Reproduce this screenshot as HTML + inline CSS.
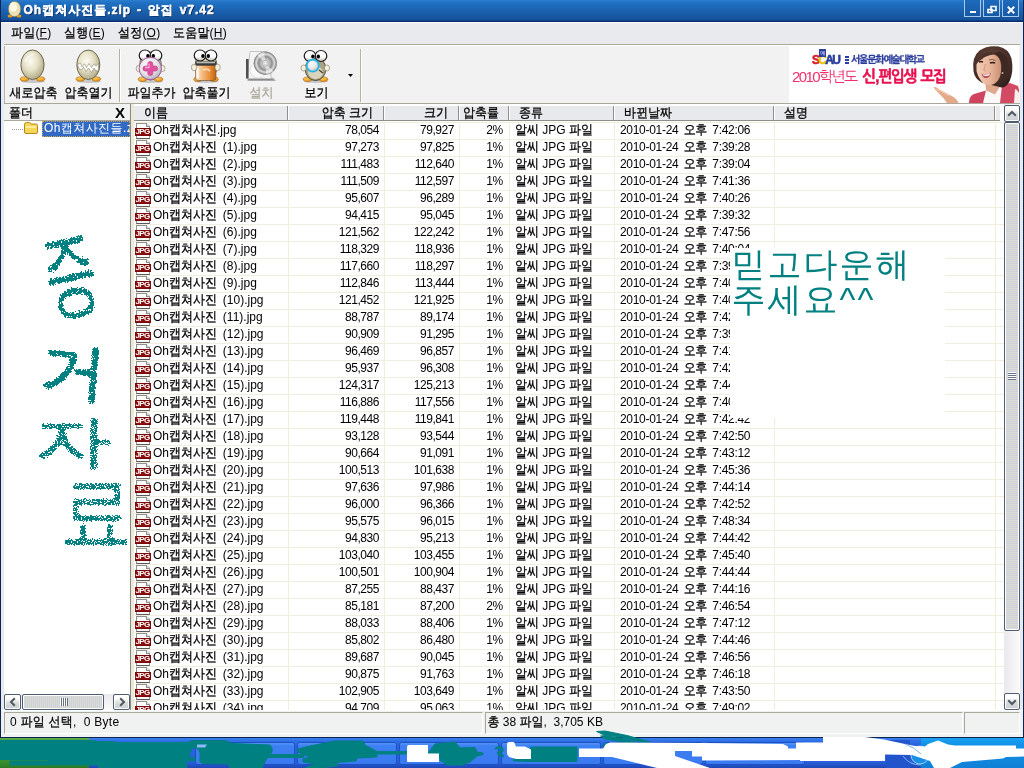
<!DOCTYPE html>
<html lang="ko"><head><meta charset="utf-8"><title>Oh캡쳐사진들.zip - 알집 v7.42</title>
<style>
*{box-sizing:border-box;margin:0;padding:0}
html,body{width:1024px;height:768px;overflow:hidden;background:#245edb}
body{opacity:.999;position:relative;font:12px "Liberation Sans","WenQuanYi Zen Hei","NanumGothic","Noto Sans CJK KR",sans-serif;color:#000}
.abs{position:absolute}
b{font-weight:normal;-webkit-text-stroke-width:.28px}
#frame{position:absolute;left:0;top:0;width:1024px;height:738px;background:#e9eaed;border-left:1px solid #0a2350;border-right:1px solid #0a2350;border-bottom:1px solid #0a2350}
#title{position:absolute;left:1px;top:0;width:1022px;height:22px;background:linear-gradient(#2a7dd0 0,#2070c2 3px,#1b63b2 10px,#17579f 17px,#144f96 20px,#062a6c 21.5px,#062a6c 22px);color:#fff;font-weight:bold;font-size:12px}
#title .t b{-webkit-text-stroke:1px #fff;font-weight:bold}
#title .t{position:absolute;left:22.5px;top:2px;white-space:nowrap;letter-spacing:1px;word-spacing:1.5px;-webkit-text-stroke:0.5px #fff;text-shadow:1px 1px 0 #06204e}
.tb{position:absolute;top:-1px;width:17px;height:18px;border:1px solid #a7c7ec;background:linear-gradient(#1e6abb,#175aa5)}
#menu{position:absolute;left:1px;top:22px;width:1022px;height:22px;background:#e9eaed;border-top:1px solid #fff}
#menu span{position:absolute;top:2px;white-space:nowrap;letter-spacing:0.2px}
#menu u{text-decoration:underline;text-underline-offset:1px}
#tbar{position:absolute;left:4px;top:44px;width:1016px;height:60px;background:#f1f2f1;border-top:1px solid #aca899;border-bottom:1px solid #aca899;box-shadow:inset 1px 0 0 #b9b6a4}
#tbar:before{content:"";position:absolute;left:0;top:0;width:100%;height:1px;background:#fff}
.tl{position:absolute;top:40px;margin-left:.5px;white-space:nowrap;text-align:center;letter-spacing:0;width:60px}
.sep{position:absolute;top:4px;width:2px;height:53px;border-left:1px solid #b5b2a0;border-right:1px solid #fff}
.ic{position:absolute}
/* panels */
#lhead{position:absolute;left:4px;top:104px;width:126px;height:17px;background:#f0f1f1;border-bottom:1px solid #aca899}
#ltree{position:absolute;left:4px;top:121px;width:126px;height:573px;background:#fff}
#split{position:absolute;left:130px;top:104px;width:4px;height:606px;background:#ece9d8;border-left:1px solid #8a8a80}
#list{position:absolute;left:134px;top:104px;width:870px;height:606px;background:#fff;overflow:hidden;
 background-image:linear-gradient(#f1eedd,#f1eedd),linear-gradient(#f1eedd,#f1eedd),linear-gradient(#f1eedd,#f1eedd),linear-gradient(#f1eedd,#f1eedd),linear-gradient(#f1eedd,#f1eedd),linear-gradient(#f1eedd,#f1eedd),linear-gradient(#f1eedd,#f1eedd);
 background-repeat:no-repeat;background-size:1px 100%;
 background-position:154px 0,250px 0,325px 0,375px 0,480px 0,640px 0,861px 0}
#lh{position:absolute;left:0;top:0;width:870px;height:18px;background:linear-gradient(#fff 0,#fff 2px,#e8e9ec 2px,#e8e9ec 16px,#8f8f88 16px,#8f8f88 17px,#fff 17px);}
#lh i{position:absolute;left:866px;top:2px;width:4px;height:16px;background:#fff}
#lh span{position:absolute;top:2px;height:14px;line-height:15px;border-right:1px solid #fff;white-space:nowrap;letter-spacing:0}
#lh span:after{content:"";position:absolute;right:0;top:0;width:1px;height:14px;background:#8f8f88}
#rows{position:absolute;left:0;top:18px;width:870px;border-top:1px solid #f1eedd}
.row{position:relative;height:17px;border-bottom:1px solid #f1eedd;white-space:nowrap}

.c{position:absolute;top:0;height:15px;line-height:15px;white-space:nowrap}
.row{z-index:0}
.ji{position:absolute;left:1px;top:5px;width:16px;height:8px;background:#8c0f0f;box-shadow:inset 0 0 0 1px #7a0808;color:#fff;font:bold 8px/8.500px "Liberation Sans",sans-serif;text-align:center;font-style:normal;letter-spacing:-.7px;text-indent:-1px;overflow:visible}
.ji:before{content:"";box-sizing:border-box;position:absolute;left:1px;top:-5px;width:14px;height:16px;border:1px solid #909090;border-bottom-color:#5a5a5a;background:#fff;z-index:-1}
.ji:after{content:"";box-sizing:border-box;position:absolute;left:11px;top:-5px;width:4px;height:4px;background:linear-gradient(45deg,#d8d8d8 50%,#fff 50%);border-left:1px solid #909090;border-bottom:1px solid #909090;z-index:-1}
.nm{left:19px;letter-spacing:0;word-spacing:2.5px}
.cs{left:154px;width:91px;text-align:right;letter-spacing:-0.45px}
.sz{left:249px;width:71px;text-align:right;letter-spacing:-0.45px}
.rt{left:324px;width:45px;text-align:right;letter-spacing:-0.3px}
.ty{left:381px;letter-spacing:0}
.dt{left:486px;letter-spacing:-0.3px;word-spacing:2.2px}
#vs{position:absolute;left:1004px;top:104px;width:16px;height:606px;background:linear-gradient(90deg,#e9e9ed,#fbfbfb)}
#hs{position:absolute;left:4px;top:694px;width:126px;height:16px;background:linear-gradient(#e9e9ed,#fbfbfb)}
.sb{position:absolute;width:16px;height:17px;border:1px solid #4f5d72;border-radius:2px;background:linear-gradient(#fff 0,#fdfdfb 25%,#d9dbd6 60%,#c9cdd9 100%);box-shadow:inset 0 0 0 1px #fff}
#status{position:absolute;left:1px;top:710px;width:1022px;height:27px;background:#f0f1f1;border-top:1px solid #fff}
.sp{position:absolute;top:1px;height:22px;border:1px solid;border-color:#aca899 #fff #fff #aca899;line-height:19px;padding-left:5px;white-space:nowrap;letter-spacing:0.1px}
#paint{position:absolute;left:730px;top:248px;width:215px;height:170px;background:#fff;overflow:hidden}
#paint div{position:absolute;left:1.5px;color:#008080;-webkit-text-stroke:0;font:34px/36px "Liberation Sans","WenQuanYi Zen Hei","NanumGothic","Noto Sans CJK KR",sans-serif;white-space:nowrap;letter-spacing:2px}
#paint span{letter-spacing:2px}
.hw{position:absolute;color:#008080;-webkit-text-stroke:2.6px #008080;font:60px/60px "Liberation Sans","WenQuanYi Zen Hei","NanumGothic","Noto Sans CJK KR",sans-serif;transform-origin:0 0;filter:url(#spray)}
.c,#menu span,.tl,#lhead span,.sp u{transform:scaleY(1.09);transform-origin:50% 55%}
#lh b{display:inline-block;transform:scaleY(1.09);transform-origin:50% 55%}
.sp u{display:inline-block;text-decoration:none}
.sel b{-webkit-text-stroke-width:0}
</style></head><body>
<svg width="0" height="0" style="position:absolute">
<defs>
<filter id="spray" x="-10%" y="-10%" width="120%" height="120%" color-interpolation-filters="sRGB"><feGaussianBlur in="SourceGraphic" stdDeviation="1.300" result="b"/><feTurbulence type="fractalNoise" baseFrequency="0.850" numOctaves="2" seed="7" result="n"/><feColorMatrix in="n" type="matrix" values="0 0 0 0 0 0 0 0 0 0 0 0 0 0 0 1.500 0 0 0 -0.250" result="m"/><feComposite in="b" in2="m" operator="arithmetic" k1="2" k2="0.200" k3="0" k4="-0.775" result="c"/><feComponentTransfer in="c"><feFuncA type="discrete" tableValues="0 1 1 1 1 1 1 1"/><feFuncR type="discrete" tableValues="0"/><feFuncG type="discrete" tableValues="0.502"/><feFuncB type="discrete" tableValues="0.502"/></feComponentTransfer></filter>
</defs></svg>
<div id="frame"></div>
<div id="title">
 <svg class="abs" style="left:6px;top:1px" width="15" height="17" viewBox="0 0 15 17"><ellipse cx="3" cy="15" rx="2.4" ry="1.5" fill="#f39a12"/><ellipse cx="12" cy="15" rx="2.4" ry="1.5" fill="#f39a12"/><ellipse cx="7.5" cy="8" rx="6.3" ry="7.8" fill="#e9e2b5" stroke="#6f6a4a" stroke-width=".6"/><ellipse cx="6.3" cy="6" rx="3.8" ry="4.8" fill="#fffef2" opacity=".8"/></svg>
 <span class="t">Oh<b>캡쳐사진들</b>.zip - <b>알집</b> v7.42</span>
 <div class="tb" style="left:963px"><i class="abs" style="left:5px;top:11px;width:6px;height:2px;background:#fff"></i></div>
 <div class="tb" style="left:982px"><svg class="abs" style="left:3px;top:5px" width="10" height="9"><path d="M4 1.5h5v4h-5z M1 4.5h4v3h-4z" fill="#1b5fb0" stroke="#fff" stroke-width="1.6"/></svg></div>
 <div class="tb" style="left:1001px"><svg class="abs" style="left:4px;top:6px" width="8" height="8"><path d="M.8 .8l6.4 6.4M7.2 .8l-6.4 6.4" stroke="#fff" stroke-width="2"/></svg></div>
</div>
<div id="menu"><span style="left:10px"><b>파일</b>(<u>F</u>)</span><span style="left:63px"><b>실행</b>(<u>E</u>)</span><span style="left:117px"><b>설정</b>(<u>O</u>)</span><span style="left:172px"><b>도움말</b>(<u>H</u>)</span></div>
<div id="tbar">
 <svg class="abs" style="left:-4px;top:-1px" width="370" height="60" viewBox="0 44 370 60">
<defs>
<radialGradient id="eg" cx=".42" cy=".38" r=".62"><stop offset="0" stop-color="#fcfbf2"/><stop offset=".5" stop-color="#e7e2c8"/><stop offset="1" stop-color="#b3ac88"/></radialGradient>
<radialGradient id="gl" cx=".4" cy=".35" r=".7"><stop offset="0" stop-color="#fff"/><stop offset=".6" stop-color="#e4e4e6"/><stop offset="1" stop-color="#a9a9b0"/></radialGradient>
<radialGradient id="cd" cx=".5" cy=".5" r=".5"><stop offset="0" stop-color="#fff"/><stop offset=".25" stop-color="#d8d8d8"/><stop offset=".6" stop-color="#8f8f8f"/><stop offset=".8" stop-color="#dcdcdc"/><stop offset="1" stop-color="#8a8a8a"/></radialGradient>
<linearGradient id="or" x1="0" x2="1"><stop offset="0" stop-color="#fdeedb"/><stop offset=".3" stop-color="#f6c089"/><stop offset=".65" stop-color="#ea9440"/><stop offset="1" stop-color="#c06412"/></linearGradient>
<radialGradient id="ft" cx=".4" cy=".3" r=".8"><stop offset="0" stop-color="#ffd257"/><stop offset="1" stop-color="#e8830f"/></radialGradient>
<linearGradient id="ey" x1="0" y1="0" x2="0" y2="1"><stop offset="0" stop-color="#fff"/><stop offset=".6" stop-color="#fafafa"/><stop offset="1" stop-color="#bdbdb5"/></linearGradient><g id="eyes"><ellipse cx="-5.500" cy="0" rx="5.800" ry="5.500" fill="url(#ey)" stroke="#1a1a1a" stroke-width="1.200"/><ellipse cx="5.500" cy="0" rx="5.800" ry="5.500" fill="url(#ey)" stroke="#1a1a1a" stroke-width="1.200"/><ellipse cx="-2.600" cy=".5" rx="1.700" ry="2.100" fill="#000"/><ellipse cx="2.800" cy=".5" rx="1.700" ry="2.100" fill="#000"/></g>
<g id="feet"><ellipse cx="-8" cy="0" rx="4.300" ry="2.200" fill="url(#ft)" stroke="#9a5a08" stroke-width=".5"/><ellipse cx="8" cy="0" rx="4.300" ry="2.200" fill="url(#ft)" stroke="#9a5a08" stroke-width=".5"/></g>
</defs>
<!-- egg 1 -->
<ellipse cx="33" cy="81.500" rx="12" ry="1.500" fill="#000" opacity=".18"/>
<use href="#feet" x="32.500" y="79"/>
<ellipse cx="32.500" cy="64.800" rx="11.600" ry="14.800" fill="url(#eg)" stroke="#5e5942" stroke-width=".9"/>
<path d="M25 62q3-7 9-8" fill="none" stroke="#fff" stroke-width="1.600" opacity=".7"/>
<!-- egg 2 -->
<ellipse cx="89" cy="81.500" rx="12" ry="1.500" fill="#000" opacity=".18"/>
<use href="#feet" x="88.300" y="79"/>
<ellipse cx="88.300" cy="64.800" rx="11.500" ry="14.800" fill="url(#eg)" stroke="#5e5942" stroke-width=".9"/>
<path d="M77.500 64.500l3-1.200 1.500 3.500 2.500-3 2 3.700 2.500-4 2.500 4 2.500-3.700 2 2.500 2.500-2.800v6.500l-2.500 1-2-3-2.500 4.500-3-4.500-2.500 3.500-2.500-4.500-2 3-2.500-1.500z" fill="#fff" stroke="#77725a" stroke-width=".5"/>
<!-- add file penguin -->
<ellipse cx="151" cy="81.500" rx="12" ry="1.500" fill="#000" opacity=".18"/>
<ellipse cx="150.500" cy="66" rx="11" ry="14" fill="#d6d0ae" stroke="#4a4636" stroke-width=".8"/>
<use href="#feet" x="150.500" y="79.300"/>
<ellipse cx="138.600" cy="68.500" rx="2.400" ry="3.200" fill="#f3f0dc" stroke="#6a654c" stroke-width=".5"/><ellipse cx="162.600" cy="68.500" rx="2.400" ry="3.200" fill="#f3f0dc" stroke="#6a654c" stroke-width=".5"/>
<use href="#eyes" x="150.500" y="55.500"/>
<circle cx="150.300" cy="68.500" r="11.200" fill="url(#gl)" stroke="#a2569c" stroke-width="1"/>
<path d="M150.300 61.500q2.600 0 2.600 2.600v1.800h2.200q2.600 0 2.600 2.600t-2.600 2.600h-2.200v1.800q0 2.600-2.600 2.600t-2.600-2.600v-1.800h-2.200q-2.600 0-2.600-2.600t2.600-2.600h2.200v-1.800q0-2.600 2.600-2.600z" fill="#e0529f" stroke="#c23a86" stroke-width=".6"/>
<path d="M149 63.500v4h-4" fill="none" stroke="#f7a8d3" stroke-width="1.300"/>
<!-- extract penguin -->
<ellipse cx="206.500" cy="81.500" rx="12" ry="1.500" fill="#000" opacity=".18"/>
<ellipse cx="206" cy="66" rx="11" ry="14" fill="#d6d0ae" stroke="#4a4636" stroke-width=".8"/>
<use href="#feet" x="206" y="79.300"/>
<use href="#eyes" x="205.500" y="55.500"/>
<path d="M195.500 62.500h20.500v15.500q0 2.500-3 2.500h-14.500q-3 0-3-2.500z" fill="url(#or)" stroke="#6b4a28" stroke-width=".6"/>
<rect x="195.500" y="61.500" width="20.500" height="4.200" fill="#3a3a3a"/><rect x="196.500" y="62" width="18.500" height="1.300" fill="#bdbdbd"/>
<path d="M198 68v10" stroke="#fff" stroke-width="2" opacity=".7"/><path d="M203 70q4-2 7 1" stroke="#fbe0bd" stroke-width="2" fill="none" opacity=".8"/>
<ellipse cx="194" cy="67.500" rx="2.600" ry="3.300" fill="#f3f0dc" stroke="#6a654c" stroke-width=".5"/><ellipse cx="217.600" cy="67.500" rx="2.600" ry="3.300" fill="#f3f0dc" stroke="#6a654c" stroke-width=".5"/>
<!-- install (disabled) -->
<path d="M250 51.500h17l4 4v22.500h2.500l2 2.500h-27l-1.500-2.500z" fill="#f4f4f4" stroke="#b9b9b9" stroke-width=".8"/>
<rect x="246" y="59" width="2.600" height="19.500" fill="#4f4f4f"/>
<path d="M248.600 78.500h24l2.500 2h-28z" fill="#8c8c8c"/>
<circle cx="258" cy="70" r="8" fill="#fafafa" stroke="#d5d5d5" stroke-width=".8"/>
<circle cx="265.300" cy="63.200" r="11.300" fill="url(#cd)" stroke="#7d7d7d" stroke-width=".7"/>
<path d="M265.300 63.200l-8-8a11.300 11.300 0 0 1 7-3.200zM265.300 63.200l8 8a11.300 11.300 0 0 1-7 3.200z" fill="#fff" opacity=".55"/>
<circle cx="265.300" cy="63.200" r="3" fill="#e9e9e9" stroke="#8b8b8b" stroke-width=".6"/><circle cx="265.300" cy="63.200" r="1.300" fill="#fff" stroke="#9b9b9b" stroke-width=".4"/>
<!-- view penguin -->
<ellipse cx="316" cy="81.500" rx="12" ry="1.500" fill="#000" opacity=".18"/>
<use href="#feet" x="315.500" y="79.300" transform="translate(0 0)"/>
<ellipse cx="315.500" cy="69" rx="10.300" ry="11.500" fill="#a9a283" stroke="#3f3b2c" stroke-width=".9"/>
<ellipse cx="315.500" cy="72.500" rx="7.500" ry="6.500" fill="#d9d4bb"/>
<path d="M319 70l4 3" stroke="#3f3b2c" stroke-width="1.200"/>
<use href="#eyes" x="315.500" y="56"/>
<ellipse cx="303.600" cy="68" rx="2.600" ry="3" fill="#f3f0dc" stroke="#6a654c" stroke-width=".5"/><ellipse cx="327" cy="68" rx="2.600" ry="3" fill="#f3f0dc" stroke="#6a654c" stroke-width=".5"/>
<circle cx="312.800" cy="65.700" r="6" fill="url(#gl)" stroke="#25b6e6" stroke-width="1.700"/>
</svg>

 <span class="tl" style="left:-1px"><b>새로압축</b></span>
 <span class="tl" style="left:54px"><b>압축열기</b></span>
 <div class="sep" style="left:115px"></div>
 <span class="tl" style="left:117px"><b>파일추가</b></span>
 <span class="tl" style="left:172px"><b>압축풀기</b></span>
 <span class="tl" style="left:227px;color:#aca899;-webkit-text-stroke:0.2px #aca899"><b>설치</b></span>
 <span class="tl" style="left:282px"><b>보기</b></span>
 <svg class="abs" style="left:344px;top:29px" width="5" height="3"><path d="M0 0h5l-2.500 3z" fill="#000"/></svg>
 <div class="sep" style="left:356px"></div>
 <div id="banner" class="abs" style="left:785px;top:0px;width:230px;height:58px;background:#fff;overflow:hidden;-webkit-text-stroke:0">
 <div class="abs" style="left:23px;top:9px;font:bold 12px/13px 'Liberation Sans',sans-serif;letter-spacing:-1.700px;-webkit-text-stroke:0.600px currentColor"><span style="color:#d9202a">S</span><span style="color:#e9c410">C</span><span style="color:#2a3f9e">A</span><span style="color:#2a3f9e">U</span></div>
 <div class="abs" style="left:30px;top:4px;width:7px;height:8px;background:#2a3f9e;color:#fff;font:5px/8px 'Liberation Sans','NanumGothic',sans-serif;text-align:center">예</div>
 <div class="abs" style="left:56px;top:11px;width:4px;height:9px;background:repeating-linear-gradient(#2a3f9e 0,#2a3f9e 2px,#fff 2px,#fff 3px)"></div>
 <div class="abs" style="left:62px;top:9px;font:bold 10px/12px 'Liberation Sans','NanumGothic',sans-serif;color:#2a3c9c;letter-spacing:-1.300px;white-space:nowrap;-webkit-text-stroke:0.300px #2a3c9c">서울문화예술대학교</div>
 <div class="abs" style="left:3px;top:23px;font:15px/18px 'Liberation Sans','NanumGothic',sans-serif;color:#f0306c;letter-spacing:-1.600px;white-space:nowrap">2010학년도</div>
 <div class="abs" style="left:73px;top:22px;font:bold 16px/19px 'Liberation Sans','NanumGothic',sans-serif;color:#e8104f;letter-spacing:-1.900px;word-spacing:3px;white-space:nowrap;transform:scaleX(.935);transform-origin:0 0;-webkit-text-stroke:0.500px #e8104f">신<span style="letter-spacing:0;margin:0 -1px 0 1px">,</span>편입생 모집</div>
 <svg class="abs" style="left:140px;top:0" width="90" height="58" viewBox="929 44 90 58">
  <defs><radialGradient id="hr" cx=".45" cy=".35" r=".7"><stop offset="0" stop-color="#6a4a3e"/><stop offset=".6" stop-color="#4a312a"/><stop offset="1" stop-color="#33211c"/></radialGradient>
  <linearGradient id="sk" x1="0" x2="1"><stop offset="0" stop-color="#f4cdb6"/><stop offset=".6" stop-color="#e6b296"/><stop offset="1" stop-color="#c98f74"/></linearGradient></defs>
  <path d="M933.500 86q3-.5 6 2.500 6 3 10 5.500 5 1.500 8.500 6.500v1.500h-11q-3-5-8-9.500-4-3.500-5.500-6.500z" fill="#e3a988"/>
  <path d="M936 88q7 3 13 6.500" fill="none" stroke="#f3cdb2" stroke-width="1.300"/>
  <path d="M969 102q0-7 5-9l12-3.500 3 12.500z" fill="#cf4560"/>
  <path d="M986 89.500l-3 12.500h22l5-19-8-1z" fill="#fdf8f8"/>
  <path d="M1002 84l8-2 8 3 1 4v13h-19z" fill="#d24a64"/>
  <path d="M1015 88q3 1 4 4v10h-5z" fill="#fbeef0"/>
  <path d="M985 78h14l2 6-6 9.500-9-4z" fill="#dda88c"/>
  <path d="M973.500 70q-2-14 6-20.500 8-5.500 19-4 10 2 13 12 2.500 13-2 23-3 6-8 6l-20-5q-7-4-8-11.500z" fill="url(#hr)"/>
  <path d="M976.500 63q.5-6 5-8.500l11-1.500q6 1 8 8 1.500 8-.5 14.500-2.500 7-9 8.500-6 .5-9.500-3.500-4-5-5-10.500z" fill="url(#sk)"/>
  <path d="M975.500 64q1.500-9 9-11.500 7-2.500 12.500.5-8 .5-13 3.500-5 3-8.500 7.500z" fill="#4a312a"/>
  <path d="M994 52.500q7 3 8 12.500l-1 12 4.500-1.500 3-9q0-12-8.500-16z" fill="#3d2822"/>
  <path d="M981.500 72.500q4.500 2 9.500-.5-1 4.500-4.500 5.200-4 0-5-4.700z" fill="#b8505a"/><path d="M982.500 73.200q4 1.300 7.500-.6l-.6 1.600q-3.200 1.400-6.200.4z" fill="#fff"/>
  <path d="M979 61.200q2-1.200 4 0M990 62q2.500-1.200 5 0" stroke="#2a1a14" stroke-width="1.500" fill="none"/>
  <path d="M978 58.500q2.500-1.500 5-.5M989 59q3-1.500 6.500.5" stroke="#5a3d33" stroke-width=".7" fill="none"/>
  <path d="M985.500 63q-1.200 4-1.700 6l2 .8" stroke="#c98f74" stroke-width=".8" fill="none"/>
  <circle cx="1002.500" cy="72" r="1" fill="#caa"/>
 </svg>
</div>

</div>
<div id="lhead"><span class="abs" style="left:5px;top:1px;letter-spacing:0"><b>폴더</b></span><span class="abs" style="left:111px;top:-.5px;font:bold 15px/17px 'Liberation Sans',sans-serif;transform:none">X</span></div>
<div id="ltree">
 <div class="abs" style="left:8px;top:8px;width:11px;border-top:1px dotted #999"></div>
 <svg class="abs" style="left:19px;top:0" width="16" height="14"><path d="M1.5 3.5q0-2 2-2h3l1.5 1.5h5q1.5 0 1.5 1.5v6.5q0 1.5-1.5 1.5h-10q-1.500 0-1.500-1.5z" fill="#f6d65a" stroke="#b58a12"/><path d="M2.500 6h10.500" stroke="#fff4b8" stroke-width="1.5"/></svg>
 <div class="abs sel" style="left:38px;top:0;width:88px;height:16px;background:#316ac5;color:#fff;outline:1px dotted #d9a64a;outline-offset:-1px;overflow:hidden;white-space:nowrap;line-height:15px;padding-left:2px;letter-spacing:0.42px">Oh<b>캡쳐사진들</b>.zip</div>
</div>
<div id="hs">
 <div class="sb" style="left:0;top:0;width:17px;height:16px"><svg class="abs" style="left:4px;top:2px" width="7" height="10"><path d="M5.800 1.200l-3.800 3.800 3.800 3.800" fill="none" stroke="#4d5766" stroke-width="2"/></svg></div>
 <div class="sb" style="left:18px;top:0;width:82px;height:16px;background:repeating-linear-gradient(90deg,#cdd0dc 0,#cdd0dc 1px,#dcddd1 1px,#dcddd1 2px)"><i class="abs" style="left:37px;top:3px;width:8px;height:8px;background:repeating-linear-gradient(90deg,#fff 0,#fff 1px,#677282 1px,#677282 2px)"></i></div>
 <div class="sb" style="left:109px;top:0;width:17px;height:16px"><svg class="abs" style="left:5px;top:2px" width="7" height="10"><path d="M1.200 1.200l3.800 3.800-3.800 3.800" fill="none" stroke="#4d5766" stroke-width="2"/></svg></div>
</div>
<div id="split"></div>
<div id="list">
 <div id="rows">
<div class="row"><i class="ji">JPG</i><span class="c nm">Oh<b>캡쳐사진</b>.jpg</span><span class="c cs">78,054</span><span class="c sz">79,927</span><span class="c rt">2%</span><span class="c ty"><b>알씨</b> JPG <b>파일</b></span><span class="c dt">2010-01-24 <b>오후</b> 7:42:06</span></div>
<div class="row"><i class="ji">JPG</i><span class="c nm">Oh<b>캡쳐사진</b> (1).jpg</span><span class="c cs">97,273</span><span class="c sz">97,825</span><span class="c rt">1%</span><span class="c ty"><b>알씨</b> JPG <b>파일</b></span><span class="c dt">2010-01-24 <b>오후</b> 7:39:28</span></div>
<div class="row"><i class="ji">JPG</i><span class="c nm">Oh<b>캡쳐사진</b> (2).jpg</span><span class="c cs">111,483</span><span class="c sz">112,640</span><span class="c rt">1%</span><span class="c ty"><b>알씨</b> JPG <b>파일</b></span><span class="c dt">2010-01-24 <b>오후</b> 7:39:04</span></div>
<div class="row"><i class="ji">JPG</i><span class="c nm">Oh<b>캡쳐사진</b> (3).jpg</span><span class="c cs">111,509</span><span class="c sz">112,597</span><span class="c rt">1%</span><span class="c ty"><b>알씨</b> JPG <b>파일</b></span><span class="c dt">2010-01-24 <b>오후</b> 7:41:36</span></div>
<div class="row"><i class="ji">JPG</i><span class="c nm">Oh<b>캡쳐사진</b> (4).jpg</span><span class="c cs">95,607</span><span class="c sz">96,289</span><span class="c rt">1%</span><span class="c ty"><b>알씨</b> JPG <b>파일</b></span><span class="c dt">2010-01-24 <b>오후</b> 7:40:26</span></div>
<div class="row"><i class="ji">JPG</i><span class="c nm">Oh<b>캡쳐사진</b> (5).jpg</span><span class="c cs">94,415</span><span class="c sz">95,045</span><span class="c rt">1%</span><span class="c ty"><b>알씨</b> JPG <b>파일</b></span><span class="c dt">2010-01-24 <b>오후</b> 7:39:32</span></div>
<div class="row"><i class="ji">JPG</i><span class="c nm">Oh<b>캡쳐사진</b> (6).jpg</span><span class="c cs">121,562</span><span class="c sz">122,242</span><span class="c rt">1%</span><span class="c ty"><b>알씨</b> JPG <b>파일</b></span><span class="c dt">2010-01-24 <b>오후</b> 7:47:56</span></div>
<div class="row"><i class="ji">JPG</i><span class="c nm">Oh<b>캡쳐사진</b> (7).jpg</span><span class="c cs">118,329</span><span class="c sz">118,936</span><span class="c rt">1%</span><span class="c ty"><b>알씨</b> JPG <b>파일</b></span><span class="c dt">2010-01-24 <b>오후</b> 7:40:04</span></div>
<div class="row"><i class="ji">JPG</i><span class="c nm">Oh<b>캡쳐사진</b> (8).jpg</span><span class="c cs">117,660</span><span class="c sz">118,297</span><span class="c rt">1%</span><span class="c ty"><b>알씨</b> JPG <b>파일</b></span><span class="c dt">2010-01-24 <b>오후</b> 7:39:50</span></div>
<div class="row"><i class="ji">JPG</i><span class="c nm">Oh<b>캡쳐사진</b> (9).jpg</span><span class="c cs">112,846</span><span class="c sz">113,444</span><span class="c rt">1%</span><span class="c ty"><b>알씨</b> JPG <b>파일</b></span><span class="c dt">2010-01-24 <b>오후</b> 7:40:12</span></div>
<div class="row"><i class="ji">JPG</i><span class="c nm">Oh<b>캡쳐사진</b> (10).jpg</span><span class="c cs">121,452</span><span class="c sz">121,925</span><span class="c rt">1%</span><span class="c ty"><b>알씨</b> JPG <b>파일</b></span><span class="c dt">2010-01-24 <b>오후</b> 7:40:48</span></div>
<div class="row"><i class="ji">JPG</i><span class="c nm">Oh<b>캡쳐사진</b> (11).jpg</span><span class="c cs">88,787</span><span class="c sz">89,174</span><span class="c rt">1%</span><span class="c ty"><b>알씨</b> JPG <b>파일</b></span><span class="c dt">2010-01-24 <b>오후</b> 7:42:18</span></div>
<div class="row"><i class="ji">JPG</i><span class="c nm">Oh<b>캡쳐사진</b> (12).jpg</span><span class="c cs">90,909</span><span class="c sz">91,295</span><span class="c rt">1%</span><span class="c ty"><b>알씨</b> JPG <b>파일</b></span><span class="c dt">2010-01-24 <b>오후</b> 7:39:40</span></div>
<div class="row"><i class="ji">JPG</i><span class="c nm">Oh<b>캡쳐사진</b> (13).jpg</span><span class="c cs">96,469</span><span class="c sz">96,857</span><span class="c rt">1%</span><span class="c ty"><b>알씨</b> JPG <b>파일</b></span><span class="c dt">2010-01-24 <b>오후</b> 7:41:02</span></div>
<div class="row"><i class="ji">JPG</i><span class="c nm">Oh<b>캡쳐사진</b> (14).jpg</span><span class="c cs">95,937</span><span class="c sz">96,308</span><span class="c rt">1%</span><span class="c ty"><b>알씨</b> JPG <b>파일</b></span><span class="c dt">2010-01-24 <b>오후</b> 7:42:30</span></div>
<div class="row"><i class="ji">JPG</i><span class="c nm">Oh<b>캡쳐사진</b> (15).jpg</span><span class="c cs">124,317</span><span class="c sz">125,213</span><span class="c rt">1%</span><span class="c ty"><b>알씨</b> JPG <b>파일</b></span><span class="c dt">2010-01-24 <b>오후</b> 7:44:00</span></div>
<div class="row"><i class="ji">JPG</i><span class="c nm">Oh<b>캡쳐사진</b> (16).jpg</span><span class="c cs">116,886</span><span class="c sz">117,556</span><span class="c rt">1%</span><span class="c ty"><b>알씨</b> JPG <b>파일</b></span><span class="c dt">2010-01-24 <b>오후</b> 7:40:38</span></div>
<div class="row"><i class="ji">JPG</i><span class="c nm">Oh<b>캡쳐사진</b> (17).jpg</span><span class="c cs">119,448</span><span class="c sz">119,841</span><span class="c rt">1%</span><span class="c ty"><b>알씨</b> JPG <b>파일</b></span><span class="c dt">2010-01-24 <b>오후</b> 7:42:42</span></div>
<div class="row"><i class="ji">JPG</i><span class="c nm">Oh<b>캡쳐사진</b> (18).jpg</span><span class="c cs">93,128</span><span class="c sz">93,544</span><span class="c rt">1%</span><span class="c ty"><b>알씨</b> JPG <b>파일</b></span><span class="c dt">2010-01-24 <b>오후</b> 7:42:50</span></div>
<div class="row"><i class="ji">JPG</i><span class="c nm">Oh<b>캡쳐사진</b> (19).jpg</span><span class="c cs">90,664</span><span class="c sz">91,091</span><span class="c rt">1%</span><span class="c ty"><b>알씨</b> JPG <b>파일</b></span><span class="c dt">2010-01-24 <b>오후</b> 7:43:12</span></div>
<div class="row"><i class="ji">JPG</i><span class="c nm">Oh<b>캡쳐사진</b> (20).jpg</span><span class="c cs">100,513</span><span class="c sz">101,638</span><span class="c rt">1%</span><span class="c ty"><b>알씨</b> JPG <b>파일</b></span><span class="c dt">2010-01-24 <b>오후</b> 7:45:36</span></div>
<div class="row"><i class="ji">JPG</i><span class="c nm">Oh<b>캡쳐사진</b> (21).jpg</span><span class="c cs">97,636</span><span class="c sz">97,986</span><span class="c rt">1%</span><span class="c ty"><b>알씨</b> JPG <b>파일</b></span><span class="c dt">2010-01-24 <b>오후</b> 7:44:14</span></div>
<div class="row"><i class="ji">JPG</i><span class="c nm">Oh<b>캡쳐사진</b> (22).jpg</span><span class="c cs">96,000</span><span class="c sz">96,366</span><span class="c rt">1%</span><span class="c ty"><b>알씨</b> JPG <b>파일</b></span><span class="c dt">2010-01-24 <b>오후</b> 7:42:52</span></div>
<div class="row"><i class="ji">JPG</i><span class="c nm">Oh<b>캡쳐사진</b> (23).jpg</span><span class="c cs">95,575</span><span class="c sz">96,015</span><span class="c rt">1%</span><span class="c ty"><b>알씨</b> JPG <b>파일</b></span><span class="c dt">2010-01-24 <b>오후</b> 7:48:34</span></div>
<div class="row"><i class="ji">JPG</i><span class="c nm">Oh<b>캡쳐사진</b> (24).jpg</span><span class="c cs">94,830</span><span class="c sz">95,213</span><span class="c rt">1%</span><span class="c ty"><b>알씨</b> JPG <b>파일</b></span><span class="c dt">2010-01-24 <b>오후</b> 7:44:42</span></div>
<div class="row"><i class="ji">JPG</i><span class="c nm">Oh<b>캡쳐사진</b> (25).jpg</span><span class="c cs">103,040</span><span class="c sz">103,455</span><span class="c rt">1%</span><span class="c ty"><b>알씨</b> JPG <b>파일</b></span><span class="c dt">2010-01-24 <b>오후</b> 7:45:40</span></div>
<div class="row"><i class="ji">JPG</i><span class="c nm">Oh<b>캡쳐사진</b> (26).jpg</span><span class="c cs">100,501</span><span class="c sz">100,904</span><span class="c rt">1%</span><span class="c ty"><b>알씨</b> JPG <b>파일</b></span><span class="c dt">2010-01-24 <b>오후</b> 7:44:44</span></div>
<div class="row"><i class="ji">JPG</i><span class="c nm">Oh<b>캡쳐사진</b> (27).jpg</span><span class="c cs">87,255</span><span class="c sz">88,437</span><span class="c rt">1%</span><span class="c ty"><b>알씨</b> JPG <b>파일</b></span><span class="c dt">2010-01-24 <b>오후</b> 7:44:16</span></div>
<div class="row"><i class="ji">JPG</i><span class="c nm">Oh<b>캡쳐사진</b> (28).jpg</span><span class="c cs">85,181</span><span class="c sz">87,200</span><span class="c rt">2%</span><span class="c ty"><b>알씨</b> JPG <b>파일</b></span><span class="c dt">2010-01-24 <b>오후</b> 7:46:54</span></div>
<div class="row"><i class="ji">JPG</i><span class="c nm">Oh<b>캡쳐사진</b> (29).jpg</span><span class="c cs">88,033</span><span class="c sz">88,406</span><span class="c rt">1%</span><span class="c ty"><b>알씨</b> JPG <b>파일</b></span><span class="c dt">2010-01-24 <b>오후</b> 7:47:12</span></div>
<div class="row"><i class="ji">JPG</i><span class="c nm">Oh<b>캡쳐사진</b> (30).jpg</span><span class="c cs">85,802</span><span class="c sz">86,480</span><span class="c rt">1%</span><span class="c ty"><b>알씨</b> JPG <b>파일</b></span><span class="c dt">2010-01-24 <b>오후</b> 7:44:46</span></div>
<div class="row"><i class="ji">JPG</i><span class="c nm">Oh<b>캡쳐사진</b> (31).jpg</span><span class="c cs">89,687</span><span class="c sz">90,045</span><span class="c rt">1%</span><span class="c ty"><b>알씨</b> JPG <b>파일</b></span><span class="c dt">2010-01-24 <b>오후</b> 7:46:56</span></div>
<div class="row"><i class="ji">JPG</i><span class="c nm">Oh<b>캡쳐사진</b> (32).jpg</span><span class="c cs">90,875</span><span class="c sz">91,763</span><span class="c rt">1%</span><span class="c ty"><b>알씨</b> JPG <b>파일</b></span><span class="c dt">2010-01-24 <b>오후</b> 7:46:18</span></div>
<div class="row"><i class="ji">JPG</i><span class="c nm">Oh<b>캡쳐사진</b> (33).jpg</span><span class="c cs">102,905</span><span class="c sz">103,649</span><span class="c rt">1%</span><span class="c ty"><b>알씨</b> JPG <b>파일</b></span><span class="c dt">2010-01-24 <b>오후</b> 7:43:50</span></div>
<div class="row"><i class="ji">JPG</i><span class="c nm">Oh<b>캡쳐사진</b> (34).jpg</span><span class="c cs">94,709</span><span class="c sz">95,063</span><span class="c rt">1%</span><span class="c ty"><b>알씨</b> JPG <b>파일</b></span><span class="c dt">2010-01-24 <b>오후</b> 7:49:02</span></div>
 </div>
 <div id="lh"><span style="left:0;width:155px;padding-left:10px"><b>이름</b></span><span style="left:155px;width:96px;text-align:right;padding-right:11px"><b>압축</b> <b>크기</b></span><span style="left:251px;width:75px;text-align:right;padding-right:11px"><b>크기</b></span><span style="left:326px;width:50px;padding-left:3px"><b>압축률</b></span><span style="left:376px;width:105px;padding-left:9px"><b>종류</b></span><span style="left:481px;width:160px;padding-left:9px"><b>바뀐날짜</b></span><span style="left:641px;width:221px;padding-left:9px"><b>설명</b></span><i></i></div>
</div>
<div id="vs">
 <div class="sb" style="left:0;top:1px"><svg class="abs" style="left:2px;top:4px" width="10" height="7"><path d="M1.200 5.800l3.800-3.800 3.800 3.800" fill="none" stroke="#4d5766" stroke-width="2"/></svg></div>
 <div class="sb" style="left:0;top:18px;height:509px;background:repeating-linear-gradient(#cdd0dc 0,#cdd0dc 1px,#dcddd1 1px,#dcddd1 2px)"><i class="abs" style="left:3px;top:249px;width:8px;height:8px;background:repeating-linear-gradient(#fff 0,#fff 1px,#677282 1px,#677282 2px)"></i></div>
 <div class="sb" style="left:0;top:589px"><svg class="abs" style="left:2px;top:5px" width="10" height="7"><path d="M1.200 1.200l3.800 3.800 3.800-3.800" fill="none" stroke="#4d5766" stroke-width="2"/></svg></div>
</div>
<div id="status">
 <div class="sp" style="left:3px;width:479px;letter-spacing:0.25px"><u>0 <b>파일 선택</b>,&nbsp; 0 Byte</u></div>
 <div class="sp" style="left:484px;width:478px;padding-left:1.5px;letter-spacing:0"><u><b>총</b> 38 <b>파일</b>,&nbsp; 3,705 KB</u></div>
 <div class="sp" style="left:963px;width:56px"></div>
</div>
<div class="hw" style="left:41px;top:245px;transform-origin:30px 33px;transform:rotate(-12deg) scale(.9,1.57);-webkit-text-stroke-width:1.6px">증</div>
<div class="hw" style="left:43px;top:342px;transform-origin:30px 33px;transform:rotate(5deg) scale(1.12,1.02)">거</div>
<div class="hw" style="left:34.5px;top:412.5px;transform:scale(1.27,.95)">자</div>
<div class="hw" style="left:60px;top:469.5px;transform:scale(1.22,1.42);-webkit-text-stroke-width:1.3px">료</div>
<div id="paint"><div style="top:-2px">믿고다운해</div><div style="top:32.5px">주세요<span>^^</span></div></div>
<svg class="abs" style="left:0;top:728px" width="1024" height="40" viewBox="0 728 1024 40">
<defs><linearGradient id="tk" x1="0" y1="0" x2="0" y2="1"><stop offset="0" stop-color="#3a80ee"/><stop offset=".1" stop-color="#2f6fe6"/><stop offset=".25" stop-color="#2a63df"/><stop offset=".8" stop-color="#2860dc"/><stop offset="1" stop-color="#1d47b4"/></linearGradient>
<linearGradient id="st" x1="0" y1="0" x2="0" y2="1"><stop offset="0" stop-color="#5fae4a"/><stop offset=".2" stop-color="#3c9636"/><stop offset=".8" stop-color="#36902f"/><stop offset="1" stop-color="#2b7a25"/></linearGradient>
<linearGradient id="bt" x1="0" y1="0" x2="0" y2="1"><stop offset="0" stop-color="#5b98f8"/><stop offset=".15" stop-color="#3d80f3"/><stop offset="1" stop-color="#3a7af0"/></linearGradient>
<linearGradient id="ty" x1="0" y1="0" x2="0" y2="1"><stop offset="0" stop-color="#1aa3f0"/><stop offset=".2" stop-color="#1292ea"/><stop offset="1" stop-color="#0f80d6"/></linearGradient></defs>
<rect x="0" y="738" width="1024" height="30" fill="url(#tk)"/>
<rect x="0" y="738" width="89" height="30" fill="url(#st)"/>
<g fill="url(#bt)" stroke="#1c4fc0" stroke-width="1">
<rect x="195.500" y="742.500" width="99" height="22" rx="2"/><rect x="297.500" y="742.500" width="99" height="22" rx="2"/><rect x="399.500" y="742.500" width="99" height="22" rx="2"/><rect x="501.500" y="742.500" width="99" height="22" rx="2"/><rect x="603.500" y="742.500" width="99" height="22" rx="2"/><rect x="705.500" y="742.500" width="99" height="22" rx="2"/></g>
<rect x="886" y="740" width="24" height="28" fill="#2254cc"/>
<rect x="921" y="738" width="103" height="30" fill="url(#ty)"/>
<circle cx="920" cy="755" r="9" fill="#1a8fe6" stroke="#9fd0f5" stroke-width="1"/>
<!-- teal scribble -->
<g fill="#008080" stroke="#008080" stroke-linejoin="round" stroke-linecap="round" stroke-width="1">
<path d="M0 740.5 L95 740.5 L97 741.5 L113 741.5 L116 742.5 L188 742.5 L192 740.5 L225 740.5 L232 743.5 L270 745 L272 748 L272 752 L266 760 L262 768 L230 768 L228 764 L203 763.5 L200 762 L200 752 L197 748 L192 748 L190 753 L189 757.4 L170.5 757.4 L195 757.4 L195 760.8 L186 761 L187 768 L99 768 L98 765 L10 765 L10 761 L48 761 L48 759.5 L10 759.5 L0 759.5z"/>
<path d="M197 744.500h10l-2 3h-8z" fill="#8fb8f8" stroke="none"/>
<path d="M264 754.500h40v3h-40z"/>
<path d="M298 749 L310 746 L325 743 L335 741 L363 741 L365 745 L372 749 L377 751.5 L407 751.5 L407 754 L377 754 L377 757 L357 758 L356 761 L337 762.5 L338 766 L320 768 L305 768 L315 764 L303 762 L303 759 L310 757 L298 752z"/>
<path d="M428 753 L435 744 L455 742 L460 748 L475 747.5 L477 752 L483 753 L483 754.5 L477 756 L470 762 L462 765 L447 765 L440 760 L439 753.5z"/>
<path d="M496 748.500q4-2.500 6 0t-3 3.500q-3 1.500 4 4" fill="none" stroke-width="2.500"/>
<path d="M514 758.500l20 1v2l-20-.5z"/>
<rect x="531" y="747" width="46" height="14.500"/>
<path d="M597 731.500l8-.5 22 4.500 23 6.500-8 .3-20-5-19-2.800z"/><path d="M601 736l5-.5 16 3 13 3.800-8 .2-22-3.500z"/>
<path d="M603 745l5-2 2 1-5 3z"/>
</g>
<!-- white scribble -->
<g fill="#fff">
<path d="M409 745h19v8.500h11v8.500h-31q-1 0-1-1v-14q0-2 2-2z"/>
<path d="M509 742h5l2 4.500h9l6 3v9.500h-15l-7-2-2-3v-10q0-2 2-2z"/>
<path d="M579 748.5 L603 748.5 L606 744 L610 742.5 L700 743 L783 744 L788 746.5 L788 748.5 L796 748.5 L796 742.5 L823 742.5 L823 737 L865 737 L884 739.5 L905 744 L915 746 L925 746.5 L928 744 L938 740.5 L948 744.5 L955 745.5 L1016 745.5 L1016 748.5 L1024 748.5 L1024 756.5 L1006 757 L1003 758.5 L962 762 L950 768 L934 768 L930 761 L912 755 L885 754.5 L885 761 L800 761 L800 760 L702 760.5 L702 756.5 L692 756.5 L692 751 L675 751 L675 756 L710 768 L657 768 L612 757 L579 757z"/>
</g>
<path d="M905 744q9 3 16 10M903 756q6 9 18 9" stroke="#7fb4ee" stroke-width="1" fill="none"/>
</svg>

</body></html>
